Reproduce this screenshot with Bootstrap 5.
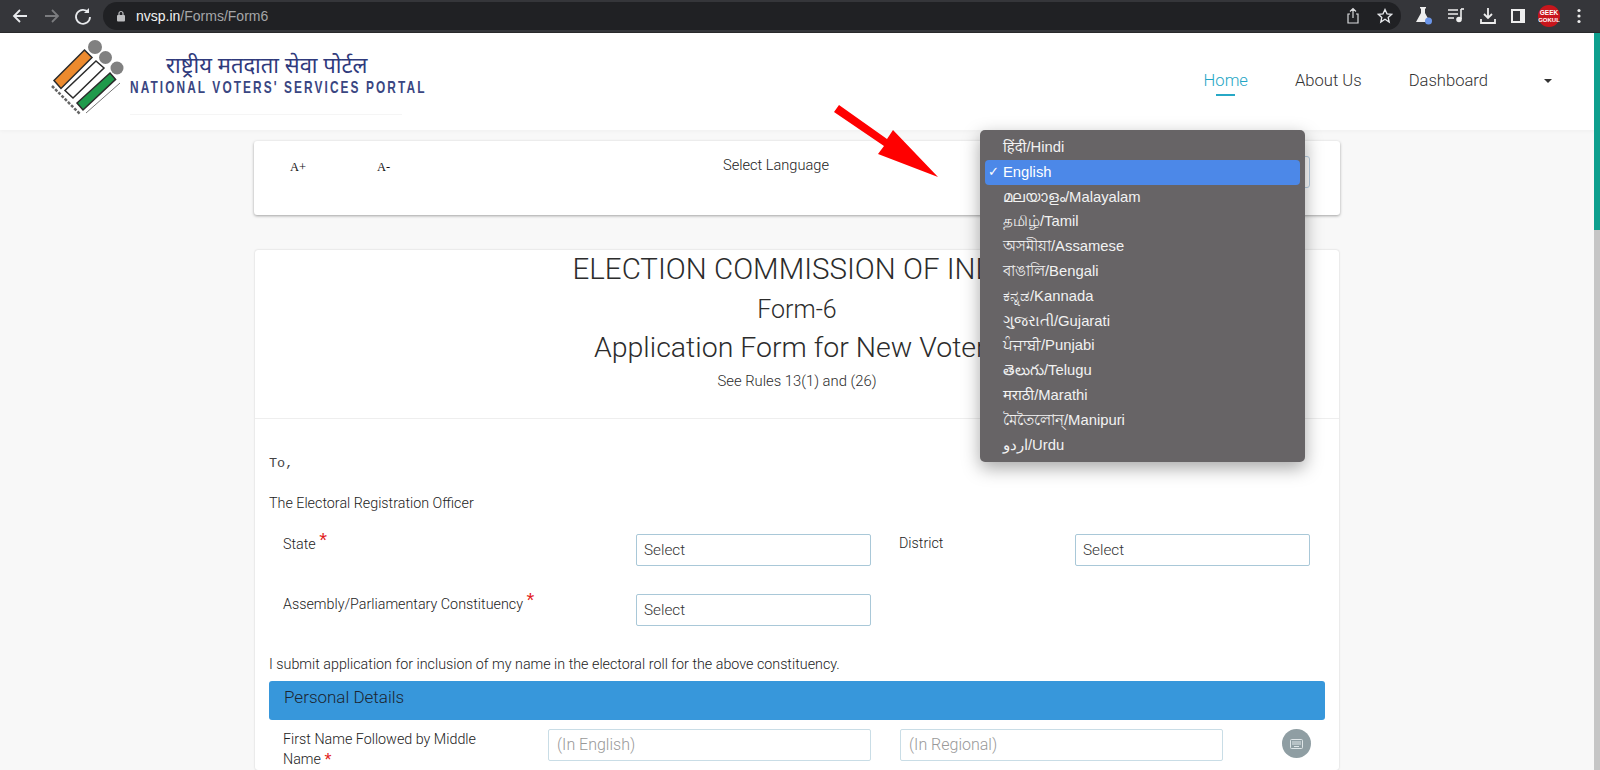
<!DOCTYPE html>
<html lang="en">
<head>
<meta charset="utf-8">
<title>Form 6</title>
<link href="https://cdn.jsdelivr.net/npm/bootstrap@5.3.0/dist/css/bootstrap.min.css" rel="stylesheet">
<style>
html,body{height:770px;overflow:hidden}
body{position:relative;background:#f8f8f8;font-family:"Liberation Sans",Arial,sans-serif;color:#3a3a3a;font-weight:400}
.chrome-bar{height:33px;background:#35363a;border-bottom:1px solid #2a2a2c;padding-left:10px}
.ico-btn{width:20px;height:20px;display:block}
.back-gap{margin-left:12px}
.reload-gap{margin-left:11px}
.url-pill{margin-left:10px;width:1298px;height:28px;background:#202124;border-radius:14px;padding:0 8px 0 13px;font-size:14px;color:#a5a6a8;flex:none}
.url-pill b{font-weight:400;color:#f1f1f1}
.lock-ico{margin-right:10px}
.ext-row{gap:12px;margin-left:auto;padding-right:18px}
.site-nav{height:97px;background:#fff;padding:3px 46px 0 50px;box-shadow:0 1px 4px rgba(0,0,0,.04)}
.nav-txt{font-family:Roboto,"Liberation Sans",sans-serif;font-weight:300;font-size:16.600px;color:#333;text-decoration:none;position:relative;padding:0}
.nav-txt.is-on{color:#1fa6c5}
.nav-txt.is-on::after{content:"";position:absolute;left:12px;bottom:-2px;height:2px;width:19px;background:#27a8c6}
.nav-list{gap:47px;padding:0 2px 0 0;margin-top:33px}
.caret-ico{width:0;height:0;border-left:4px solid transparent;border-right:4px solid transparent;border-top:4px solid #333;margin-left:9px}
.brand-txt{margin:16px 0 0 5px}
.brand-hi{font-family:"Noto Sans","Liberation Sans",sans-serif;font-size:22px;color:#2f3a7c;line-height:24px;padding-left:36px}
.brand-en{display:block;white-space:nowrap;font-size:16.500px;font-weight:700;letter-spacing:2.900px;color:#3a4682;line-height:18px;margin-top:2px;transform:scaleX(.72);transform-origin:0 50%}
.brand-rule{height:1px;width:272px;background:#f5f5f5;margin-top:18px}
.page-col{width:1086px;margin:0 auto 0 254px}
.tool-card{height:74px;margin-top:11px;background:#fff;border-radius:3px;box-shadow:0 1px 3px rgba(0,0,0,.35);padding:16px 36px;font-size:14.600px;font-family:Roboto,"Liberation Sans",sans-serif;font-weight:300;color:#222}
.size-a{font-family:"Liberation Serif",serif;font-size:12.500px;font-weight:400;color:#111;width:87px;line-height:20px}
.lang-label{margin-left:259px;line-height:16px}
.lang-sel{position:absolute;left:1160px;top:156px;width:150px;height:32px;border:1px solid #b9cfe4;border-radius:3px;background:#fff}
.form-card{height:520px;margin-top:35px;margin-left:1px;width:1084px;background:#fff;border-radius:3px;box-shadow:0 0 2px rgba(0,0,0,.2)}
.head-box{height:169px;border-bottom:1px solid #eee;text-align:center;color:#2c2c2c;padding-top:2px;font-family:Roboto,"Liberation Sans",sans-serif;font-weight:300}
.t-one,.t-two,.t-three{font-family:Roboto,"Liberation Sans",sans-serif;font-weight:300}
.t-one{font-size:29.500px;line-height:34px;margin:0}
.t-two{font-size:25px;line-height:30px;margin:9px 0 0}
.t-three{font-size:28.500px;line-height:34px;margin:6px 0 0}
.t-four{font-size:14.800px;line-height:18px;margin:7px 0 0}
.form-body{padding:0 14px;font-size:14.300px;font-family:Roboto,"Liberation Sans",sans-serif;font-weight:300;color:#222}
.to-line{font-family:"Liberation Mono",monospace;font-weight:400;color:#444;margin-top:36px;line-height:18px;font-size:13.500px}
.ero-line{margin-top:21px;line-height:18px}
.fld-row{display:flex;margin-top:22px;height:32px}
.fld-row.row-b{margin-top:28px}
.lab{width:367px;flex:none;padding-left:14px;line-height:18px}
.lab-b{width:176px;flex:none;margin-left:28px;line-height:18px}
.star{display:inline-block;color:#e21b1b;font-family:"Liberation Sans",sans-serif;font-size:20px;line-height:12px;vertical-align:2px}
.star-low{font-size:18px;vertical-align:-2px}
.sel-box{width:235px;flex:none;height:32px;border:1px solid #a9c8d8;border-radius:2px;padding:5px 7px;font-size:15.300px;line-height:20px;color:#333;background:#fff}
.submit-line{margin-top:29px;line-height:18px}
.sec-bar{height:39px;margin-top:8px;background:#3797db;color:#1c2530;border-radius:3px;font-size:17px;line-height:33px;padding-left:15px;font-weight:300}
.name-row{display:flex;margin-top:9px}
.name-lab{width:279px;flex:none;padding-left:14px;line-height:20px}
.name-in{height:32px;width:323px;flex:none;border:1px solid #c9dde6;border-radius:2px;padding:5px 8px;font-size:16px;color:#999;line-height:20px;background:#fff}
.name-gap{margin-left:29px}
.kbd-dot{width:29px;height:29px;flex:none;border-radius:50%;background:#8f9ea3;margin-left:59px;display:flex;align-items:center;justify-content:center}
.scroll-thumb{position:absolute;right:0;top:33px;width:6px;height:197px;background:#0e9f8e}
.scroll-track{position:absolute;right:0;top:230px;width:6px;height:540px;background:#c6c6c6}
.lang-menu{position:absolute;left:980px;top:130px;width:325px;height:332px;background:#676466;border-radius:5px;box-shadow:0 6px 18px rgba(0,0,0,.35);padding:5px;color:#f2f2f2;font-size:14.800px;font-family:"Liberation Sans","Noto Sans",sans-serif}
.lang-item{height:24.800px;line-height:24.800px;padding-left:18px;border-radius:4px;position:relative}
.lang-item.is-sel{background:#4c88e8;color:#fff}
.lang-item.is-sel::before{content:"✓";position:absolute;left:3px;font-size:13px}
.red-arrow{position:absolute;left:830px;top:100px;width:115px;height:85px}
</style>
</head>
<body>
<div class="chrome-bar d-flex align-items-center">
  <svg class="ico-btn" viewBox="0 0 20 20" fill="none" stroke="#e8eaed" stroke-width="1.8"><path d="M17 10H4M10 4l-6 6 6 6"/></svg>
  <svg class="ico-btn back-gap" viewBox="0 0 20 20" fill="none" stroke="#7b7c7f" stroke-width="1.8"><path d="M3 10h13M10 4l6 6-6 6"/></svg>
  <svg class="ico-btn reload-gap" viewBox="0 0 20 20" fill="none" stroke="#e8eaed" stroke-width="1.8"><path d="M15.500 6.500A7 7 0 1 0 17 11"/><path d="M16 2v5h-5" fill="#e8eaed" stroke="none"/></svg>
  <div class="url-pill d-flex align-items-center">
    <svg width="10" height="12" viewBox="0 0 10 12" class="lock-ico"><rect x="1" y="5" width="8" height="6.500" rx="1" fill="#bdbec0"/><path d="M3 5V3.500a2 2 0 0 1 4 0V5" fill="none" stroke="#bdbec0" stroke-width="1.2"/></svg>
    <span><b>nvsp.in</b>/Forms/Form6</span>
    <svg class="ms-auto" width="16" height="18" viewBox="0 0 16 18" fill="none" stroke="#d8d9db" stroke-width="1.2"><path d="M5 7H3v9h10V7h-2M8 11V2M5 4.500 8 1.500l3 3"/></svg>
    <svg class="ms-3" width="16" height="16" viewBox="0 0 16 16" fill="none" stroke="#e8eaed" stroke-width="1.3"><path d="m8 1.500 2 4.300 4.600.5-3.400 3.100 1 4.600L8 11.200l-4.200 2.800 1-4.600L1.400 6.300l4.600-.5z"/></svg>
  </div>
  <div class="ext-row d-flex align-items-center">
    <svg width="20" height="20" viewBox="0 0 20 20"><path d="M6 1h6v1.500h-1V7l5 9H2l5-9V2.500H6z" fill="#eee"/><circle cx="14.500" cy="15" r="3.500" fill="#6b95e8"/></svg>
    <svg width="20" height="20" viewBox="0 0 20 20" fill="none" stroke="#eee" stroke-width="1.6"><path d="M2 4h10M2 8h10M2 12h6"/><path d="M15 3v10"/><circle cx="13" cy="13.500" r="2" fill="#eee"/><path d="M15 3h3"/></svg>
    <svg width="20" height="20" viewBox="0 0 20 20" fill="none" stroke="#eee" stroke-width="1.8"><path d="M10 2v10M6 8l4 4 4-4M3 13v4h14v-4"/></svg>
    <svg width="16" height="16" viewBox="0 0 16 16"><rect x="1" y="1" width="14" height="14" fill="#eee"/><rect x="3" y="3" width="7" height="10" fill="#35363a"/></svg>
    <svg width="22" height="22" viewBox="0 0 22 22"><circle cx="11" cy="11" r="11" fill="#c8161c"/><text x="11" y="10" text-anchor="middle" font-size="6.500" font-weight="700" fill="#fff" font-family="Liberation Sans">GEEK</text><text x="11" y="17" text-anchor="middle" font-size="6" font-weight="700" fill="#fff" font-family="Liberation Sans">GOKUL</text></svg>
    <svg class="ms-1" width="6" height="16" viewBox="0 0 6 16"><circle cx="3" cy="2.500" r="1.600" fill="#eee"/><circle cx="3" cy="8" r="1.600" fill="#eee"/><circle cx="3" cy="13.500" r="1.600" fill="#eee"/></svg>
  </div>
</div>
<nav class="site-nav d-flex align-items-start justify-content-between">
  <div class="d-flex align-items-start">
    <svg width="75" height="82" viewBox="0 0 75 82">
      <circle cx="45" cy="11" r="7" fill="#808080"/><circle cx="55.500" cy="21.500" r="6.500" fill="#808080"/><circle cx="67" cy="32" r="6.500" fill="#808080"/>
      <g stroke="#2b2b2b" stroke-width="1.500">
        <path d="M34.500 14 42 21.500 11 52.500 4 44.500z" fill="#ec8a2e"/>
        <path d="M46 25 54 32 23 62 15 54.500z" fill="#fff"/>
        <path d="M60 37 65.600 43.400 33 74 27 67z" fill="#1f9a4b"/>
      </g>
      <path d="M2 50 30 78" stroke="#666" stroke-width="2.500" stroke-dasharray="3 1.500" fill="none"/>
      <path d="M36 77 70 47" stroke="#777" stroke-width="1" fill="none"/>
    </svg>
    <div class="brand-txt">
      <div class="brand-hi">राष्ट्रीय मतदाता सेवा पोर्टल</div>
      <div class="brand-en">NATIONAL VOTERS' SERVICES PORTAL</div>
      <div class="brand-rule"></div>
    </div>
  </div>
  <div class="nav-list d-flex align-items-center">
    <a class="nav-txt is-on" href="#">Home</a>
    <a class="nav-txt" href="#">About Us</a>
    <a class="nav-txt" href="#">Dashboard</a>
    <span class="caret-ico"></span>
  </div>
</nav>
<div class="page-col">
  <div class="tool-card d-flex">
    <span class="size-a">A+</span><span class="size-a">A-</span>
    <span class="lang-label">Select Language</span>
  </div>
  <div class="form-card">
    <div class="head-box">
      <h1 class="t-one">ELECTION COMMISSION OF INDIA</h1>
      <h2 class="t-two">Form-6</h2>
      <h2 class="t-three">Application Form for New Voters</h2>
      <p class="t-four">See Rules 13(1) and (26)</p>
    </div>
    <div class="form-body">
      <div class="to-line">To,</div>
      <div class="ero-line">The Electoral Registration Officer</div>
      <div class="fld-row">
        <div class="lab">State <span class="star">*</span></div>
        <div class="sel-box">Select</div>
        <div class="lab-b">District</div>
        <div class="sel-box">Select</div>
      </div>
      <div class="fld-row row-b">
        <div class="lab">Assembly/Parliamentary Constituency <span class="star">*</span></div>
        <div class="sel-box">Select</div>
      </div>
      <div class="submit-line">I submit application for inclusion of my name in the electoral roll for the above constituency.</div>
      <div class="sec-bar">Personal Details</div>
      <div class="name-row">
        <div class="name-lab"><div>First Name Followed by Middle</div><div>Name <span class="star star-low">*</span></div></div>
        <div class="name-in">(In English)</div>
        <div class="name-in name-gap">(In Regional)</div>
        <div class="kbd-dot"><svg width="13" height="10" viewBox="0 0 13 10"><rect x=".5" y=".5" width="12" height="9" rx="1" fill="none" stroke="#dfe6e8"/><path d="M2 3h9M2 5h9M4 7.500h5" stroke="#dfe6e8"/></svg></div>
      </div>
    </div>
  </div>
</div>
<div class="lang-sel"></div>
<div class="scroll-thumb"></div>
<div class="scroll-track"></div>
<svg class="red-arrow" viewBox="0 0 115 85"><path d="M4 12 9 5 57 39 63 30 108 77 48 54 54 46z" fill="#f00"/></svg>
<div class="lang-menu">
  <div class="lang-item">हिंदी/Hindi</div>
  <div class="lang-item is-sel">English</div>
  <div class="lang-item">മലയാളം/Malayalam</div>
  <div class="lang-item">தமிழ்/Tamil</div>
  <div class="lang-item">অসমীয়া/Assamese</div>
  <div class="lang-item">বাঙালি/Bengali</div>
  <div class="lang-item">ಕನ್ನಡ/Kannada</div>
  <div class="lang-item">ગુજરાતી/Gujarati</div>
  <div class="lang-item">ਪੰਜਾਬੀ/Punjabi</div>
  <div class="lang-item">తెలుగు/Telugu</div>
  <div class="lang-item">मराठी/Marathi</div>
  <div class="lang-item">মৈতৈলোন্/Manipuri</div>
  <div class="lang-item">اردو/Urdu</div>
</div>
<script src="https://cdn.jsdelivr.net/npm/bootstrap@5.3.0/dist/js/bootstrap.bundle.min.js"></script>
</body>
</html>
